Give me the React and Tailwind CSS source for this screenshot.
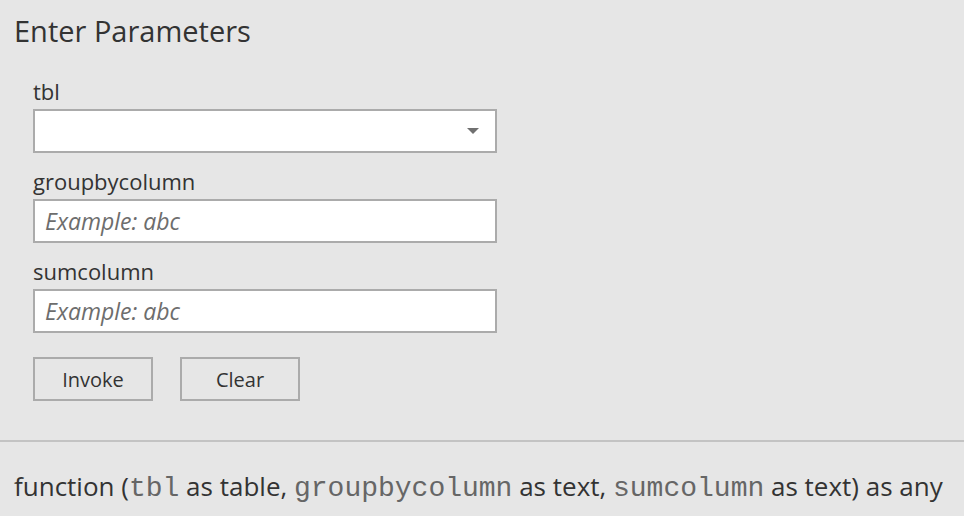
import React from 'react';

const sans = { fontFamily: '"Open Sans", "Noto Sans", sans-serif' };

const Field = ({ label, children }) => (
  <div className="flex flex-col">
    <label className="h-[46px] flex items-end pb-[5px] text-[22px] leading-[26px] text-[#333]">
      {label}
    </label>
    {children}
  </div>
);

const TextBox = () => (
  <input
    type="text"
    placeholder="Example: abc"
    className="w-[464px] h-[44px] border-2 border-[#ababab] bg-white px-[10px] text-[23px] italic text-[#333] placeholder:text-[#6d6d6d] placeholder:italic outline-none"
  />
);

const Mono = ({ children }) => (
  <span className="font-[family-name:Liberation_Mono,Courier_New,monospace] text-[28px] text-[#666]">
    {children}
  </span>
);

export default function App() {
  return (
    <div
      className="w-[964px] h-[516px] bg-[#e6e6e6] flex flex-col overflow-hidden"
      style={sans}
    >
      <h1 className="pl-[14px] pt-[12px] text-[29px] leading-[38px] text-[#333] font-normal">
        Enter Parameters
      </h1>
      <div className="pl-[33px] pt-[17px] flex flex-col">
        <div className="flex flex-col">
          <label className="h-[42px] flex items-end pb-[5px] text-[22px] leading-[26px] text-[#333]">
            tbl
          </label>
          <div className="w-[464px] h-[44px] border-2 border-[#ababab] bg-white flex items-center justify-end pr-[16px]">
            <svg width="12" height="7" viewBox="0 0 12 7">
              <path d="M0 0 H12 L6 6 Z" fill="#707070" />
            </svg>
          </div>
        </div>
        <Field label="groupbycolumn">
          <TextBox />
        </Field>
        <Field label="sumcolumn">
          <TextBox />
        </Field>
        <div className="flex gap-[27px] mt-[24px]">
          <button className="w-[120px] h-[44px] border-2 border-[#ababab] bg-[#e6e6e6] text-[20px] leading-[24px] pt-[2px] text-[#333]">
            Invoke
          </button>
          <button className="w-[120px] h-[44px] border-2 border-[#ababab] bg-[#e6e6e6] text-[20px] leading-[24px] pt-[2px] text-[#333]">
            Clear
          </button>
        </div>
      </div>
      <div className="mt-[39px] h-[2px] bg-[#c3c3c3] w-full" />
      <div className="pl-[14px] pt-[27px] text-[26px] leading-[34px] text-[#333] whitespace-nowrap">
        function (<Mono>tbl</Mono> as table, <Mono>groupbycolumn</Mono> as text,{' '}
        <Mono>sumcolumn</Mono> as text) as any
      </div>
    </div>
  );
}
